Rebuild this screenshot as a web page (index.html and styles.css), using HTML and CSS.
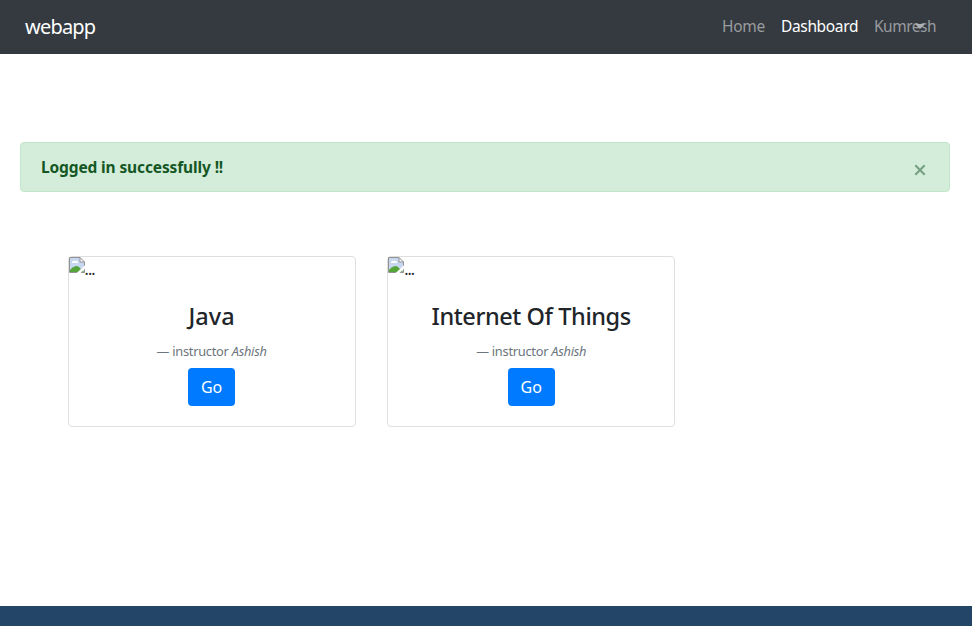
FILE: index.html
```html
<!DOCTYPE html>
<html lang="en">
<head>
<meta charset="utf-8">
<title>webapp</title>
<link rel="stylesheet" href="styles.css">
</head>
<body>
<nav class="navbar">
  <a class="brand">webapp</a>
  <div class="links">
    <a class="link home">Home</a>
    <a class="link active">Dashboard</a>
    <a class="link user">Kumresh<span class="caret"></span></a>
  </div>
</nav>
<main>
  <div class="alert">
    <strong>Logged in successfully !!</strong>
    <svg class="close" width="12" height="12" viewBox="0 0 12 12"><path d="M1.3 1.3L10.7 10.7M10.7 1.3L1.3 10.7"/></svg>
  </div>
  <div class="cards">
    <article class="card">
      <div class="image">
        <svg width="16" height="16" viewBox="0 0 16 16"><path fill="#c8d7f0" d="M.5.5H11L15.5 5V15.5H.5z"/><path fill="#fff" d="M3 6a2 2 0 0 1 3-2 2 2 0 0 1 3 2zM11 1v4h4z"/><path fill="#56a53a" d="M1 15v-2q2-3 6-4 3 0 4 2l4 4z"/><path fill="none" stroke="#929292" d="M.5 15.5V.5H11L15.5 5V15.5zM11 .5V5h4.500"/><path stroke="#fff" stroke-width="2.600" d="M8 17.500L17 9"/></svg><span>...</span>
      </div>
      <div class="body">
        <h2>Java</h2>
        <p>— instructor <em>Ashish</em></p>
        <a class="button">Go</a>
      </div>
    </article>
    <article class="card">
      <div class="image">
        <svg width="16" height="16" viewBox="0 0 16 16"><path fill="#c8d7f0" d="M.5.5H11L15.5 5V15.5H.5z"/><path fill="#fff" d="M3 6a2 2 0 0 1 3-2 2 2 0 0 1 3 2zM11 1v4h4z"/><path fill="#56a53a" d="M1 15v-2q2-3 6-4 3 0 4 2l4 4z"/><path fill="none" stroke="#929292" d="M.5 15.5V.5H11L15.5 5V15.5zM11 .5V5h4.500"/><path stroke="#fff" stroke-width="2.600" d="M8 17.500L17 9"/></svg><span>...</span>
      </div>
      <div class="body">
        <h2 class="long">Internet Of Things</h2>
        <p>— instructor <em>Ashish</em></p>
        <a class="button">Go</a>
      </div>
    </article>
  </div>
</main>
<footer></footer>
</body>
</html>
```
FILE: styles.css
```css
* { box-sizing: border-box; }
body {
  margin: 0;
  height: 626px;
  display: flex;
  flex-direction: column;
  overflow: hidden;
  background: #fff;
  color: #212529;
  font: 16px/24px "Noto Sans", "Open Sans", sans-serif;
}
.navbar {
  height: 54px;
  flex: none;
  display: flex;
  align-items: center;
  justify-content: space-between;
  padding: 0 36px 0 25px;
  background: #343a40;
}
.brand { color: #fff; font-size: 20px; line-height: 30px; letter-spacing: -.8px; }
.links { display: flex; gap: 16px; padding-bottom: 2px; }
.link { color: #9a9c9f; font-size: 15.5px; letter-spacing: -.25px; white-space: nowrap; }
.home { width: 43px; }
.active { width: 77px; color: #fff; letter-spacing: -.35px; }
.user { position: relative; width: 62px; letter-spacing: -.5px; }
.caret {
  position: absolute;
  left: 41px;
  top: 10px;
  border: 5px solid transparent;
  border-top-color: #adb0b3;
  border-bottom: 0;
}
main { flex: 1; padding: 88px 22px 0 20px; }
.alert {
  height: 50px;
  display: flex;
  align-items: center;
  justify-content: space-between;
  padding: 0 23px 0 20px;
  border: 1px solid #c3e6cb;
  border-radius: 4px;
  background: #d4edda;
  color: #155724;
}
.alert strong { font-size: 15.5px; letter-spacing: -.13px; }
.close { margin-top: 6px; fill: none; stroke: #75a282; stroke-width: 2.2; }
.cards { display: flex; gap: 31.6px; padding: 64px 0 0 47.6px; }
.card {
  width: 288px;
  height: 171px;
  border: 1px solid #dfdfdf;
  border-radius: 4px;
}
.image { height: 24px; display: flex; }
.image svg { flex: none; }
.image span { letter-spacing: -1px; }
.body { padding: 21px 20px 0; text-align: center; }
h2 {
  margin: 0 0 8px;
  font-size: 23.5px;
  font-weight: 500;
  line-height: 29px;
  white-space: nowrap;
}
.long { letter-spacing: -.42px; }
p { margin: 0 0 5px; color: #6c757d; font-size: 12.8px; line-height: 24px; letter-spacing: -.25px; }
.button {
  display: block;
  width: 47px;
  height: 38px;
  margin: 0 auto;
  border-radius: 4px;
  background: #007bff;
  color: #fff;
  line-height: 38px;
}
footer { flex: none; height: 20px; background: #234567; }
```
